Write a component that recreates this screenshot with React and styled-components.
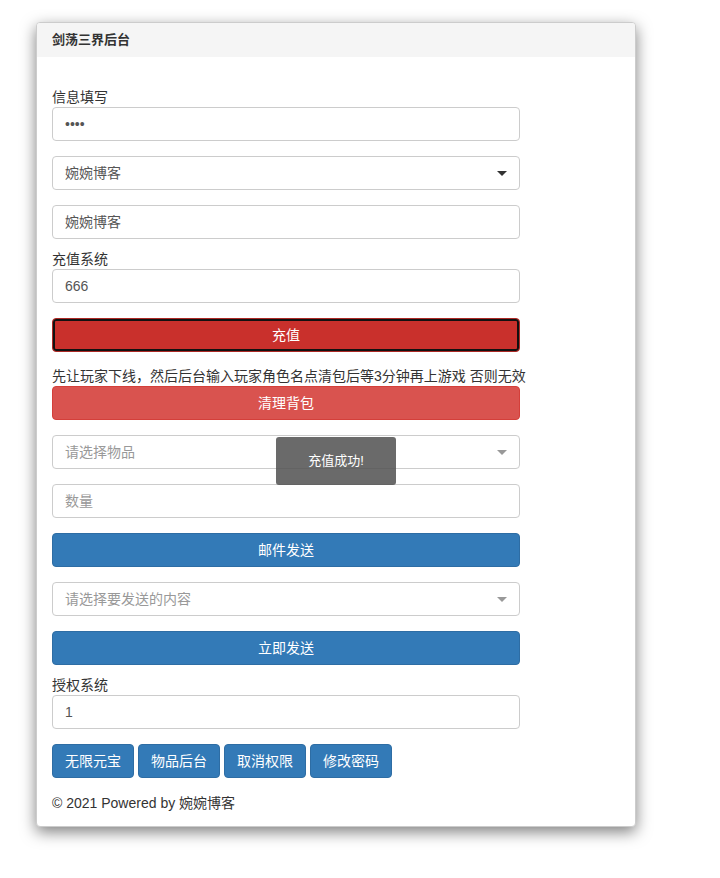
import React from "react"
import styled, { createGlobalStyle } from "styled-components"

const Global = createGlobalStyle`
  body {
    margin: 0;
    font-family: "Liberation Sans", "Noto Sans CJK SC", sans-serif;
    font-size: 14px;
    color: #333;
    background: #fff;
  }
`

const Page = styled.div`
  padding: 22px 0 40px 36px;
`

const Panel = styled.div`
  position: relative;
  width: 598px;
  background: #fff;
  border: 1px solid #ccc;
  border-radius: 4px;
  box-shadow: 0 5px 15px rgba(0, 0, 0, 0.5);
  overflow: hidden;
`

const Heading = styled.div`
  height: 34px;
  line-height: 34px;
  padding: 0 15px;
  background: #f5f5f5;
  font-weight: bold;
  font-size: 13px;
`

const Body = styled.div`
  padding: 30px 15px 13px;
  width: 468px;
  display: flex;
  flex-direction: column;
`

const Label = styled.div`
  line-height: 20px;
  margin-top: ${(p) => p.$top || 0}px;
`

const Field = styled.div`
  position: relative;
  height: 34px;
  box-sizing: border-box;
  border: 1px solid #ccc;
  border-radius: 4px;
  padding: 0 12px;
  line-height: 32px;
  margin-top: ${(p) => p.$top || 0}px;
  color: ${(p) => (p.$placeholder ? "#999" : "#555")};
`

const Caret = styled.span`
  position: absolute;
  right: 12px;
  top: 14px;
  border-left: 5px solid transparent;
  border-right: 5px solid transparent;
  border-top: 5px solid ${(p) => (p.$light ? "#999" : "#333")};
`

const Button = styled.div`
  height: 34px;
  box-sizing: border-box;
  line-height: 32px;
  text-align: center;
  color: #fff;
  border-radius: 4px;
  margin-top: ${(p) => p.$top || 0}px;
  background: ${(p) => p.$bg};
  border: 1px solid ${(p) => p.$border};
  box-shadow: ${(p) => (p.$focus ? "inset 0 0 0 2px #111" : "none")};
`

const Note = styled.div`
  line-height: 20px;
  margin-top: 14px;
  white-space: nowrap;
`

const Row = styled.div`
  display: flex;
  gap: 4px;
  margin-top: 15px;
`

const SmallButton = styled.div`
  width: 82px;
  height: 34px;
  box-sizing: border-box;
  line-height: 32px;
  text-align: center;
  color: #fff;
  background: #337ab7;
  border: 1px solid #2e6da4;
  border-radius: 4px;
`

const Footer = styled.div`
  line-height: 20px;
  margin-top: 15px;
`

const Toast = styled.div`
  position: absolute;
  left: 239px;
  top: 414px;
  width: 120px;
  height: 48px;
  line-height: 48px;
  text-align: center;
  color: #fff;
  background: rgba(80, 80, 80, 0.85);
  border-radius: 3px;
  font-size: 13px;
`

const blue = { $bg: "#337ab7", $border: "#2e6da4" }

export default function App() {
  return (
    <Page>
      <Global />
      <Panel>
        <Heading>剑荡三界后台</Heading>
        <Body>
          <Label>信息填写</Label>
          <Field>••••</Field>
          <Field $top={15}>
            婉婉博客
            <Caret />
          </Field>
          <Field $top={15}>婉婉博客</Field>
          <Label $top={10}>充值系统</Label>
          <Field>666</Field>
          <Button $top={15} $bg="#c9302c" $border="#ac2925" $focus>
            充值
          </Button>
          <Note>先让玩家下线，然后后台输入玩家角色名点清包后等3分钟再上游戏 否则无效</Note>
          <Button $bg="#d9534f" $border="#d43f3a">清理背包</Button>
          <Field $top={15} $placeholder>
            请选择物品
            <Caret $light />
          </Field>
          <Field $top={15} $placeholder>数量</Field>
          <Button $top={15} {...blue}>邮件发送</Button>
          <Field $top={15} $placeholder>
            请选择要发送的内容
            <Caret $light />
          </Field>
          <Button $top={15} {...blue}>立即发送</Button>
          <Label $top={10}>授权系统</Label>
          <Field>1</Field>
          <Row>
            <SmallButton>无限元宝</SmallButton>
            <SmallButton>物品后台</SmallButton>
            <SmallButton>取消权限</SmallButton>
            <SmallButton>修改密码</SmallButton>
          </Row>
          <Footer>© 2021 Powered by 婉婉博客</Footer>
        </Body>
        <Toast>充值成功!</Toast>
      </Panel>
    </Page>
  )
}
